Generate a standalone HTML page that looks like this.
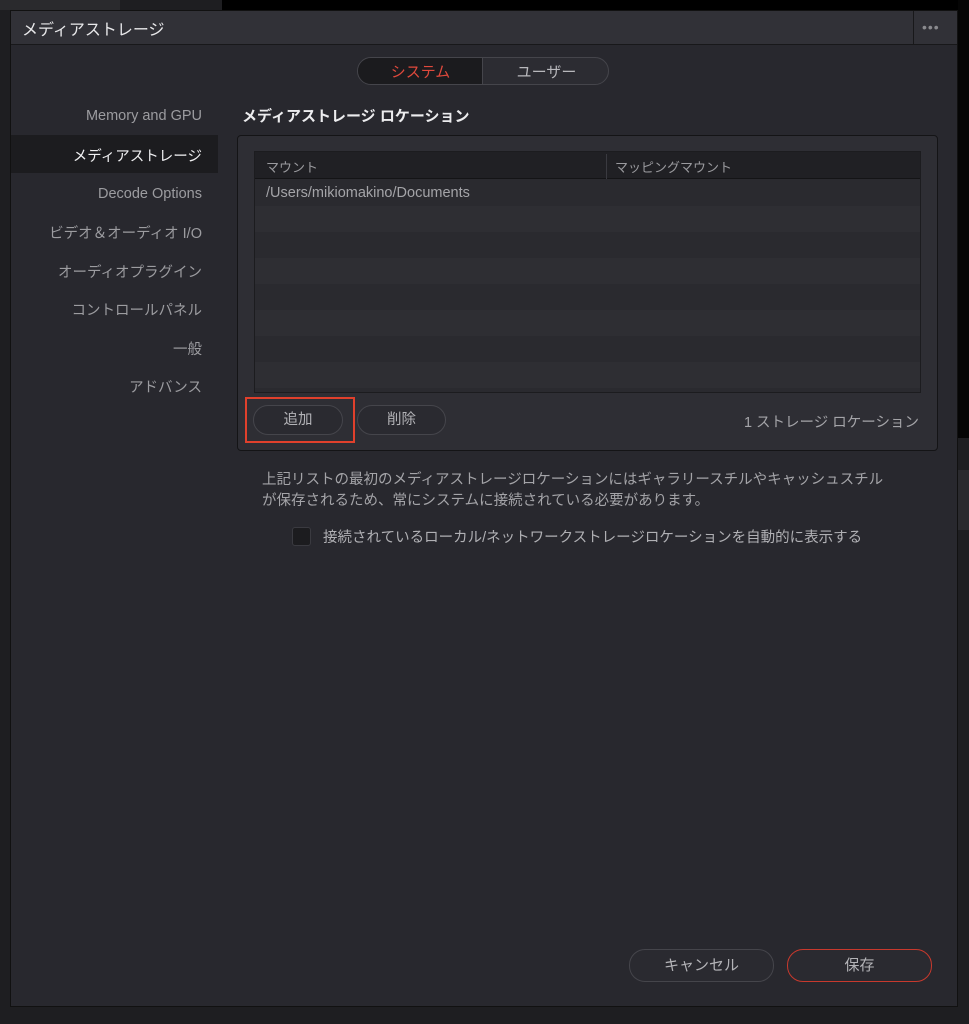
<!DOCTYPE html>
<html><head><meta charset="utf-8"><style>
*{margin:0;padding:0;box-sizing:border-box}
body{width:969px;height:1024px;background:#1e1e21;font-family:"Liberation Sans","Noto Sans CJK JP",sans-serif;position:relative;overflow:hidden;color:#a8a8ac}
.a{position:absolute}
.side{position:absolute;right:767px;font-size:14.5px;color:#9c9ca0;white-space:nowrap}
.btn{position:absolute;border:1px solid #45454b;border-radius:16px;text-align:center;font-size:14.5px;color:#b4b4b8;background:#2a2a30}
</style></head><body>
<div class="a" style="left:0;top:0;width:120px;height:10px;background:#2a2a2d"></div>
<div class="a" style="left:222px;top:0;width:747px;height:10px;background:#000"></div>
<div class="a" style="left:958px;top:0;width:11px;height:438px;background:#050505"></div>
<div class="a" style="left:958px;top:470px;width:11px;height:60px;background:#2a2a2e"></div>
<div class="a" style="left:10px;top:10px;width:948px;height:997px;background:#28282e;border:1px solid #111"></div>
<div class="a" style="left:11px;top:11px;width:946px;height:34px;background:#313137;border-bottom:1px solid #18181a"></div>
<div class="a" style="left:22px;top:16px;font-size:16px;color:#e8e8ea">メディアストレージ</div>
<div class="a" style="left:913px;top:11px;width:1px;height:34px;background:#18181a"></div>
<div class="a" style="left:922px;top:19px;font-size:14px;color:#8a8a8e;letter-spacing:1px">•••</div>

<div class="a" style="left:357px;top:57px;width:252px;height:28px;border:1px solid #45454b;border-radius:14px;background:#2c2c32;overflow:hidden">
<div class="a" style="left:0;top:0;width:125px;height:26px;background:#1b1b1e;border-right:1px solid #45454b"></div>
<div class="a" style="left:0;top:3px;width:125px;text-align:center;font-size:15px;color:#e0493c">システム</div>
<div class="a" style="left:126px;top:3px;width:125px;text-align:center;font-size:15px;color:#b8b8bc">ユーザー</div>
</div>

<div class="a" style="left:11px;top:135px;width:207px;height:38px;background:#1c1c1f"></div>
<div class="side" style="top:108px">Memory and GPU</div>
<div class="side" style="top:145px;color:#f0f0f2">メディアストレージ</div>
<div class="side" style="top:186px">Decode Options</div>
<div class="side" style="top:222px">ビデオ＆オーディオ I/O</div>
<div class="side" style="top:261px">オーディオプラグイン</div>
<div class="side" style="top:299px">コントロールパネル</div>
<div class="side" style="top:338px">一般</div>
<div class="side" style="top:376px">アドバンス</div>

<div class="a" style="left:242px;top:105px;font-size:15px;color:#ececee;font-weight:bold">メディアストレージ ロケーション</div>

<div class="a" style="left:237px;top:135px;width:701px;height:316px;background:#2e2e34;border:1px solid #141416;border-radius:4px"></div>
<div class="a" style="left:254px;top:151px;width:667px;height:242px;border:1px solid #1c1c1f;background:#2a2a2f;overflow:hidden">
<div class="a" style="left:0;top:0;width:665px;height:27px;background:#202024;border-bottom:1px solid #141416"></div>
<div class="a" style="left:351px;top:2px;width:1px;height:25px;background:#3a3a40"></div>
<div class="a" style="left:11px;top:5px;font-size:13px;color:#9a9a9e">マウント</div>
<div class="a" style="left:360px;top:5px;font-size:13px;color:#9a9a9e">マッピングマウント</div>
<div class="a" style="left:0;top:54px;width:665px;height:26px;background:#2e2e33"></div>
<div class="a" style="left:0;top:106px;width:665px;height:26px;background:#2e2e33"></div>
<div class="a" style="left:0;top:158px;width:665px;height:26px;background:#2e2e33"></div>
<div class="a" style="left:0;top:210px;width:665px;height:26px;background:#2e2e33"></div>
<div class="a" style="left:11px;top:33px;font-size:14.5px;color:#a4a4a8">/Users/mikiomakino/Documents</div>
</div>

<div class="btn" style="left:253px;top:405px;width:90px;height:30px;line-height:29px">追加</div>
<div class="btn" style="left:357px;top:405px;width:89px;height:30px;line-height:29px">削除</div>
<div class="a" style="left:245px;top:397px;width:110px;height:46px;border:2px solid #e0402c"></div>
<div class="a" style="right:50px;top:411px;font-size:14.5px;color:#a4a4a8">1 ストレージ ロケーション</div>

<div class="a" style="left:262px;top:470px;font-size:14.5px;line-height:21px;color:#a4a4a8;width:660px">上記リストの最初のメディアストレージロケーションにはギャラリースチルやキャッシュスチル<br>が保存されるため、常にシステムに接続されている必要があります。</div>
<div class="a" style="left:292px;top:527px;width:19px;height:19px;background:#1c1c1f;border:1px solid #3a3a40;border-radius:3px"></div>
<div class="a" style="left:323px;top:526px;font-size:14.5px;color:#b0b0b4">接続されているローカル/ネットワークストレージロケーションを自動的に表示する</div>

<div class="btn" style="left:629px;top:949px;width:145px;height:33px;line-height:32px;font-size:15px">キャンセル</div>
<div class="btn" style="left:787px;top:949px;width:145px;height:33px;line-height:32px;font-size:15px;border:1.5px solid #c8392d">保存</div>
</body></html>
